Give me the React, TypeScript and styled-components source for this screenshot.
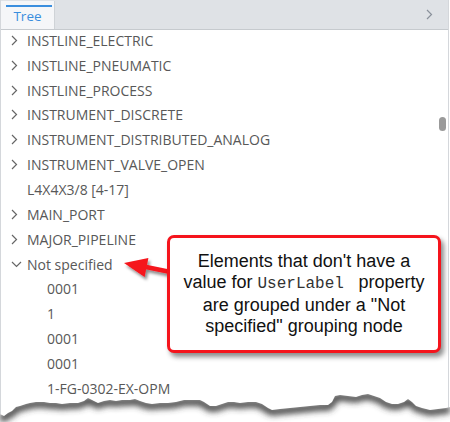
import React from "react";
import styled, { createGlobalStyle } from "styled-components";

const Global = createGlobalStyle`
  html, body { margin: 0; padding: 0; background: #ffffff; }
  body { font-family: "Open Sans", "Noto Sans", sans-serif; }
`;

const Frame = styled.div`
  position: relative;
  width: 450px;
  height: 422px;
  overflow: hidden;
  background: #ffffff;
`;

const Panel = styled.div`
  width: 447px;
  height: 422px;
  border-left: 1px solid #d4d7db;
  border-right: 1px solid #d4d7db;
  display: flex;
  flex-direction: column;
  overflow: hidden;
`;

const TabBar = styled.div`
  height: 29px;
  flex: 0 0 29px;
  display: flex;
  align-items: stretch;
  background: #dfe2e6;
  border-bottom: 1px solid #c6cace;
`;

const Tab = styled.div`
  position: relative;
  width: 54px;
  margin-top: 1px;
  background: #f5f6f8;
  border-right: 1px solid #cfd3d7;
  display: flex;
  align-items: center;
  justify-content: center;
  padding-top: 2px;
  box-sizing: border-box;
  font-size: 13.5px;
  color: #3a8ede;
  &::before {
    content: "";
    position: absolute;
    left: 5px;
    right: 2px;
    top: 4px;
    height: 2px;
    background: #3a8ede;
  }
`;

const BarSpacer = styled.div`
  flex: 1;
`;

const BarChevron = styled.div`
  width: 30px;
  display: flex;
  align-items: center;
  justify-content: center;
  padding-right: 4px;
`;

const TreeList = styled.div`
  display: flex;
  flex-direction: column;
  margin-top: -2px;
`;

const Row = styled.div<{ $depth: number }>`
  height: 24.85px;
  flex: 0 0 24.85px;
  display: flex;
  align-items: center;
  padding-left: ${(p) => 8 + p.$depth * 20}px;
  font-size: 14px;
  color: #585858;
  white-space: nowrap;
`;

const Toggle = styled.span`
  width: 18px;
  flex: 0 0 18px;
  display: flex;
  align-items: center;
  justify-content: flex-start;
  padding-left: 2px;
  box-sizing: border-box;
`;

const Thumb = styled.div`
  position: absolute;
  left: 439px;
  top: 117px;
  width: 7px;
  height: 14px;
  border-radius: 4px;
  background: #9a9a9a;
`;

const Callout = styled.div`
  position: absolute;
  left: 167px;
  top: 235px;
  width: 274px;
  height: 118px;
  box-sizing: border-box;
  border: 3px solid #f5141c;
  border-radius: 7px;
  background: #ffffff;
  box-shadow: 3px 4px 5px rgba(0, 0, 0, 0.45);
  display: flex;
  align-items: center;
  justify-content: center;
  text-align: center;
  font-family: "Liberation Sans", Arial, sans-serif;
  font-size: 18px;
  line-height: 21px;
  color: #111111;
`;

const Code = styled.span`
  font-family: "Liberation Mono", "DejaVu Sans Mono", monospace;
  font-size: 16px;
  color: #333333;
  white-space: pre;
`;

const Overlay = styled.svg`
  position: absolute;
  left: 0;
  top: 0;
  pointer-events: none;
`;

const ChevronRight = ({ color = "#666" }: { color?: string }) => (
  <svg width="7" height="11" viewBox="0 0 7 11">
    <path d="M1 1 L5.5 5.5 L1 10" fill="none" stroke={color} strokeWidth="1.2" />
  </svg>
);

const ChevronDown = () => (
  <svg width="11" height="7" viewBox="0 0 11 7">
    <path d="M1 1 L5.5 5.5 L10 1" fill="none" stroke="#666" strokeWidth="1.2" />
  </svg>
);

type Node = { label: string; depth: number; kind: "closed" | "open" | "leaf" };

const nodes: Node[] = [
  { label: "INSTLINE_ELECTRIC", depth: 0, kind: "closed" },
  { label: "INSTLINE_PNEUMATIC", depth: 0, kind: "closed" },
  { label: "INSTLINE_PROCESS", depth: 0, kind: "closed" },
  { label: "INSTRUMENT_DISCRETE", depth: 0, kind: "closed" },
  { label: "INSTRUMENT_DISTRIBUTED_ANALOG", depth: 0, kind: "closed" },
  { label: "INSTRUMENT_VALVE_OPEN", depth: 0, kind: "closed" },
  { label: "L4X4X3/8 [4-17]", depth: 0, kind: "leaf" },
  { label: "MAIN_PORT", depth: 0, kind: "closed" },
  { label: "MAJOR_PIPELINE", depth: 0, kind: "closed" },
  { label: "Not specified", depth: 0, kind: "open" },
  { label: "0001", depth: 1, kind: "leaf" },
  { label: "1", depth: 1, kind: "leaf" },
  { label: "0001", depth: 1, kind: "leaf" },
  { label: "0001", depth: 1, kind: "leaf" },
  { label: "1-FG-0302-EX-OPM", depth: 1, kind: "leaf" },
  { label: "0WDPC", depth: 1, kind: "leaf" },
];

const tear: [number, number][] = [
  [0, 414], [4, 416], [8, 413], [12, 411], [16, 407], [20, 406], [26, 404], [30, 403],
  [36, 402], [44, 402], [50, 403], [56, 403], [62, 404], [70, 403], [78, 403], [84, 401],
  [88, 398], [92, 400], [98, 403], [104, 401], [110, 400], [116, 401], [122, 400],
  [130, 400], [135, 399], [140, 401], [146, 403], [152, 404], [160, 403], [168, 403],
  [176, 402], [184, 400], [192, 400], [200, 400], [204, 402], [210, 406], [216, 406],
  [222, 404], [228, 402], [234, 402], [240, 403], [248, 402], [256, 402], [262, 404],
  [268, 408], [272, 410], [280, 409], [290, 408], [300, 407], [310, 406], [320, 405],
  [328, 405], [332, 402], [335, 396], [340, 395], [348, 396], [356, 397], [362, 395],
  [368, 394], [374, 396], [380, 398], [386, 402], [392, 404], [398, 404], [404, 402],
  [408, 399], [412, 402], [416, 406], [422, 408], [430, 410], [438, 409], [446, 408],
  [450, 407],
];

const tearLine = tear.map(([x, y], i) => `${i === 0 ? "M" : "L"}${x} ${y}`).join(" ");
const tearFill = `${tearLine} L450 422 L0 422 Z`;

export default function App() {
  return (
    <>
      <Global />
      <Frame>
        <Panel>
          <TabBar>
            <Tab>Tree</Tab>
            <BarSpacer />
            <BarChevron>
              <ChevronRight color="#8a919b" />
            </BarChevron>
          </TabBar>
          <TreeList>
            {nodes.map((n, i) => (
              <Row key={i} $depth={n.depth}>
                <Toggle>
                  {n.kind === "closed" && <ChevronRight />}
                  {n.kind === "open" && <ChevronDown />}
                </Toggle>
                {n.label}
              </Row>
            ))}
          </TreeList>
        </Panel>
        <Thumb />
        <Overlay width="450" height="422" viewBox="0 0 450 422">
          <defs>
            <clipPath id="below">
              <path d={tearFill} />
            </clipPath>
            <filter id="blur" x="-10%" y="-100%" width="120%" height="300%">
              <feGaussianBlur stdDeviation="3" />
            </filter>
            <filter id="arrowShadow" x="-30%" y="-50%" width="160%" height="200%">
              <feDropShadow dx="2" dy="3" stdDeviation="1.5" floodColor="#000" floodOpacity="0.45" />
            </filter>
          </defs>
          <path d={tearFill} fill="#ffffff" />
          <g clipPath="url(#below)">
            <path
              d={tearLine}
              fill="none"
              stroke="#3a3a3a"
              strokeWidth="7"
              transform="translate(0 2)"
              filter="url(#blur)"
            />
          </g>
          <g filter="url(#arrowShadow)">
            <path d="M146 267 L168 271.5" stroke="#f5141c" strokeWidth="4.5" fill="none" />
            <path d="M124 263 L148.4 258 L146.5 267.6 L144.6 277 Z" fill="#f5141c" />
          </g>
        </Overlay>
        <Callout>
          <div>
            Elements that don't have a
            <br />
            value for <Code>UserLabel </Code> property
            <br />
            are grouped under a "Not
            <br />
            specified" grouping node
          </div>
        </Callout>
      </Frame>
    </>
  );
}
